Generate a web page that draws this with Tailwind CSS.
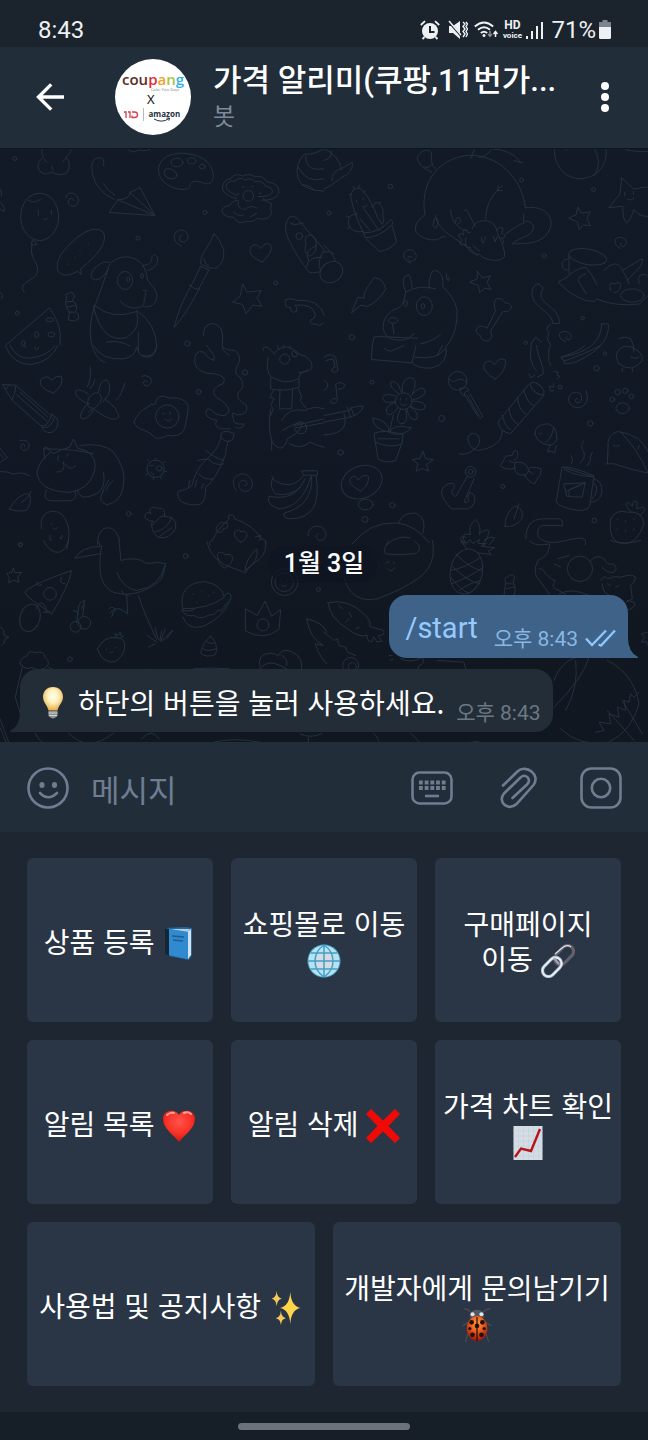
<!DOCTYPE html>
<html lang="ko">
<head>
<meta charset="utf-8">
<meta name="viewport" content="width=device-width, initial-scale=1">
<title>가격 알리미</title>
<script src="https://cdn.jsdelivr.net/npm/@tailwindcss/browser@4"></script>
</head>
<body class="flex min-h-screen flex-col bg-[#1d2631] font-[Roboto,'Noto_Sans_CJK_KR',sans-serif] text-white">

<!-- Status bar -->
<div class="flex h-[47px] shrink-0 items-center justify-between bg-[#1b242d] pt-3 pr-[37px] pl-[38px] text-[24px] leading-6 text-[#eef1f3]">
  <time>8:43</time>
  <div class="flex items-center gap-2">
    <svg class="h-5 w-5" viewBox="0 0 20 20" aria-label="알람"><circle cx="10" cy="11" r="8" fill="#eef1f3"/><path d="M10 6v6h4.500" fill="none" stroke="#1b242d" stroke-width="2"/><path d="M.8 5 5 1.200M19.200 5 15 1.200M4.500 17 2.500 19M15.500 17l2 2" stroke="#eef1f3" stroke-width="1.800" fill="none"/></svg>
    <svg class="-mr-0.5 h-5 w-5" viewBox="0 0 20 20" aria-label="진동"><path d="M1 6h4l7-5v18l-7-6H1z" fill="#eef1f3"/><path d="M0 1 14 17" stroke="#1b242d" stroke-width="2"/><path d="M1 1 13 15" stroke="#eef1f3" stroke-width="1.500"/><path d="m15 2 2 2-2 2.500 2 2.500-2 2.500 2 2.500-2 3M18 2l1.500 2L18 6.500 19.500 9 18 11.500l1.500 2.500-1.500 3" fill="none" stroke="#eef1f3" stroke-width="1.400"/></svg>
    <svg class="-mr-1 h-5 w-6" viewBox="0 0 24 20" fill="none" stroke="#eef1f3" stroke-width="1.900" aria-label="Wi-Fi"><path d="M.8 6.500q9.200-8 18.400 0M4 9.800q6-5.200 12 0M6.800 13q3.200-2.600 6.400 0"/><circle cx="10" cy="15.500" r="1.500" fill="#eef1f3" stroke="none"/><path d="M16 11v5m-2-2 2 2.500 2-2.500" stroke="#87909a" stroke-width="1.400"/><path d="M21.500 17v-5.500m-2 2.500 2-2.500 2 2.500" stroke-width="1.500"/></svg>
    <span class="flex w-5 flex-col items-center font-bold"><span class="text-[12px] leading-[11px]">HD</span><span class="text-[8px] leading-[9px]">voice</span></span>
    <svg class="-ml-1 h-5 w-[17px]" viewBox="0 0 17 20" stroke="#eef1f3" stroke-width="2" aria-label="신호"><path d="M1 16v3M6 11v8M11 6v13M16 2v17" /></svg>
    <span class="flex items-center gap-[3px]">71%<svg class="h-5 w-3" viewBox="0 0 12 20" aria-hidden="true"><path d="M3.500 0h5v2H12v6H0V2h3.500z" fill="#7c858e"/><path d="M0 7h12v10.500q0 1.500-1.500 1.500h-9Q0 19 0 17.500z" fill="#eef1f3"/></svg></span>
  </div>
</div>

<!-- Chat header -->
<header class="flex h-[101px] shrink-0 items-center bg-[#222d3a] pr-[39px] pb-0.5 pl-9">
  <button type="button" aria-label="뒤로" class="shrink-0"><svg class="h-7 w-7" viewBox="0 0 28 28" fill="none" stroke="#fff" stroke-width="3.400"><path d="M28 14H3M15.200 1.400 2.500 14l12.700 12.600"/></svg></button>
  <svg class="ml-[51px] h-[76px] w-[76px] shrink-0" viewBox="0 0 76 76" role="img" aria-label="coupang X 11번가 amazon">
    <circle cx="38" cy="38" r="38" fill="#fff"/>
    <text x="7" y="26" font-family="Open Sans, sans-serif" font-size="15" font-weight="600" fill="#5a2c25">cou<tspan fill="#d9303a">p</tspan><tspan fill="#f0a02c">a</tspan><tspan fill="#a4c63c">n</tspan><tspan fill="#35b2e2">g</tspan></text>
    <text x="36" y="32" font-family="Roboto, sans-serif" font-size="4" fill="#999">Color Your Days</text>
    <text x="32" y="45" font-family="Noto Sans, sans-serif" font-size="13" fill="#111">X</text>
    <path d="M9 53h2v6M13 53h2v6M17 53h2.500c4 0 4 5.500 0 5.500H17v-2" fill="none" stroke="#dd3848" stroke-width="1.300"/>
    <path d="M28.500 49v13" stroke="#bbb" stroke-width="1"/>
    <text x="33.500" y="58" font-family="Open Sans, sans-serif" font-size="8" font-weight="700" fill="#252f3e">amazon</text>
    <path d="M39 60q8 4.500 15-.5m-2.500-.3 3-.2-.6 2.600" fill="none" stroke="#252f3e" stroke-width="1"/>
  </svg>
  <div class="ml-[22px] min-w-0 flex-1">
    <h1 class="truncate text-[31px] leading-10 font-medium">가격 알리미(쿠팡,11번가...</h1>
    <p class="text-[24px] leading-8 text-[#7d8997]">봇</p>
  </div>
  <button type="button" aria-label="메뉴" class="shrink-0"><svg class="h-[30px] w-2" viewBox="0 0 8 30" fill="#fff"><circle cx="4" cy="4" r="4"/><circle cx="4" cy="15" r="4"/><circle cx="4" cy="26" r="4"/></svg></button>
</header>

<!-- Conversation -->
<main class="relative flex min-h-[594px] flex-1 flex-col justify-end overflow-hidden border-t border-[#0e151e] bg-linear-to-b from-[#121a27] to-[#101720] pb-[10px]">
  <!-- Doodle wallpaper -->
  <svg class="absolute inset-0 h-full w-full" viewBox="0 148 648 594" preserveAspectRatio="xMidYMid slice" fill="none" stroke="#243140" stroke-width="3" stroke-linecap="round" stroke-linejoin="round" aria-hidden="true">
    <g transform="translate(0 145) scale(.333333)">
      <circle cx="44" cy="39" r="6"/><circle cx="615" cy="201" r="6"/><circle cx="414" cy="278" r="6"/><circle cx="827" cy="412" r="6"/><circle cx="52" cy="503" r="6"/><circle cx="562" cy="594" r="8"/>
      <path d="M130 0q-10 20 0 35-25 20-12 40 15 18 35 5 30 15 50 0 12-25-5-45 20-15 15-35M132 40l8 10M200 35l-12 15M160 75l-5-12M380 8q15 20 35 5 25 8 45-8"/>
      <path d="M310 60q8-25-17-23-25 5-15 50 10 50 65 75M310 115q15 22 35 35M328 200l25-37q38-2 37-22l30-15 44 83zM464 209 353 163M464 209 390 141"/>
      <path d="M478 60c10-35 60-45 110-30 45 15 60 55 48 78-15 20-35-10-60 2-15 10 5 20-30 22-50-5-80-40-68-72z"/><ellipse cx="531" cy="51" rx="18" ry="13"/><ellipse cx="575" cy="46" rx="13" ry="9"/><ellipse cx="607" cy="63" rx="9" ry="7"/><ellipse cx="511" cy="85" rx="20" ry="14" transform="rotate(25 511 85)"/>
      <path d="M710 160q-50-15-42-40 5-20 25-20 10-20 35-8 20-10 38 2 25-5 35 15 40 5 35 35-10 22-52 20M712 150q-42-15-32-35 10-12 25-8 15-15 30-3 20-10 30 5 25-5 30 12 25 5 22 20-10 14-42 12M715 165q-20 0-25 15-20 0-25 17 10 20 35 18 15 25 40 12 20 5 30-8 35 8 45-15-8-15 0-30-20-5-25-15M715 170q-5 20 20 22 15-15 35-5M700 200q20 15 30 10M750 215l20-12"/><circle cx="745" cy="151" r="16"/><path d="M730 123v4M758 121v4M712 145h6M777 143h6"/>
      <ellipse cx="119" cy="214" rx="57" ry="71"/><path d="M85 165q20 12 38-5M115 195v15M154 195v12M130 218q6 9 13 0M98 285l-5 13h18l-8-13M96 298c-10 40 20 50 17 80-5 30-65 30-40 63"/>
      <path d="M198 158q0-18 20-15 20 6 17 25-5 17-20 14-16-7-8-20 10-8 14 3M545 302q-27-12-22-35 10-18 30-12 16 12 9 28-10 12-22 3-6-12 5-17"/>
      <path d="M232 378q-45 25-60-5-10-40 60-98 55-40 78-15 20 40-68 110l2 16z"/><path d="M265 293v2M240 315v2M225 335v2M205 355v2"/>
      <path d="M285 480 325 370c-5-10 20-35 50-36 35 0 60 20 66 60 0 20 35 35 29 65-6 25-28 28-40 24M325 370c-20 40-50 40-52 20 5-25 40-50 57-38M430 360c40-5 15-30 35-32 15 5 10 40-22 47M285 480c-30 80-10 160 30 170M285 480q50 45 125 18 15 50-30 78-75 20-100-95M360 465c10 20 60 35 72 8 0-15 5-20 5-30M410 495q60 40 60 110-10 35-45 25M415 560v60M320 590q40-8 70 12"/><ellipse cx="375" cy="405" rx="23" ry="27"/><ellipse cx="385" cy="402" rx="4" ry="7"/><ellipse cx="426" cy="391" rx="4" ry="8"/><path d="M429 435q6 5 12 0"/>
      <path d="M200 455q-8-10 5-10 10-12 18 5 0 10-6 14 20 15 10 35 12 8 8 22-15 10-30 2 0-15 5-22-20-20-10-46zM202 468h16M200 485l27-5M205 500h20"/>
      <path d="M642 265c40 40 35 80 10 100-15 10-38-5-50-10 0-35 20-40 40-90zM612 340q5 20 15 20M600 362l28 12M602 362c-30 70-55 90-80 184 50-60 55-80 104-172M568 418q15 15 30 14"/>
      <path d="M787 350q-50-20-34-46 15-15 30 5 10-20 28-12 12 20-24 53zM728 415l13 25 43-5-13 22 15 25-28-3-20 26-10-28-30-7 22-18z"/>
      <path d="M970 10q-30 20-55 15-30 25-22 70 10 40 80 42M917 30q0 50 53 40M895 65q25 50 75 35M907 120q20-5 35 14"/>
      <path d="M870 213q-20 20-10 55 20 50 65 110 10 8 38 0-15-30 10-65l-70-80q-15-25-33-20zM870 232q10 10 40 0M925 345q-15-30 25-45M920 365q0-30 45-30"/><circle cx="898" cy="272" r="10"/><path d="M930 268q-20 0-12 30-10 20 10 35 22-10 20-30 5-30-18-35"/>
      <path d="M858 462q-10 25 14 25 0 20 18 10 2-12-4-18 55-5 60 30 0 10-15 15 0 15 20 12 5 10 18-3M858 462q20-5 30 2 70-5 85 45"/>
      <path d="M20 597 148 487q40 50 32 110"/><ellipse cx="149" cy="523" rx="12" ry="6"/><ellipse cx="110" cy="567" rx="6" ry="9"/><ellipse cx="154" cy="567" rx="10" ry="7"/><ellipse cx="70" cy="593" rx="5" ry="8"/>
      <path d="M610 570q0-35 30-36 35 5 27 65 0 20 20 30M0 130q8 15 4 22M0 170q20 20 12 28l-12-8M0 440q12 10 4 20"/>
    </g>
    <g transform="translate(324 145) scale(.333333)">
      <circle cx="199" cy="123" r="7"/><circle cx="15" cy="203" r="6"/><circle cx="593" cy="104" r="6"/><circle cx="809" cy="132" r="6"/><circle cx="661" cy="331" r="6"/><circle cx="776" cy="518" r="5"/><circle cx="84" cy="575" r="8"/><circle cx="605" cy="592" r="5"/>
      <path d="M0 10q45 20 52 60l33-20q5 30-35 48-30 25-50 32M52 70q-30 5-28 36M0 45q25-5 22-30"/>
      <path d="M120 265q-30-60-40-110 5-35 30-25 20 15 40 60 10 30 24 45M120 190l45 65M108 220l30 35M145 185q5-15 17-14 20 15 14 40 8 10-1 25M100 205q-30 0-27 30 10 30 45 23M82 145l-6 3M90 130l-2-8M105 127v-7M118 140l7-4M75 215l-7-3M77 245l-7 5M165 175l5-6"/><path d="M120 262q50 0 80-40 10 5 5 15-40 40-80 40zM126 280l40 38q35-5 52-30l-14-48M115 182q8 8 14-4M98 165v5M117 157v5"/>
      <path d="M303 207c-15-80 25-165 130-178 110 0 165 90 171 158M303 207q-35 25-28 50 20 30 65 26 15-12 25-10M323 80c-20-10-40-20-43-43 10-30 40-25 42-15 0 30 2 40 13 48M302 65q10 5 20-8M604 187c60-10 85 30 75 60-20 50-70 47-115 48 30-25 65-20 65-55-15-20-30-12-30-8v-25M485 222c0-60 40-95 50-100M523 120l-3 15h14M545 265q50-35 54-33M335 210c0 50 90 80 125 120M380 195c0 30 25 60 50 60M420 195l8-2 26 50M455 0l-15 40M465 35q20 0 35-20M500 10q60 0 90 40M570 45l25 8"/>
      <path d="M445 250c5-30 60-35 72 0 5 25 30 60 24 85-20 20-65 5-75-8-30 0-50-35-40-50M440 260q-10 5-15-8-10 0-5 15-12-5-18 2l12 14q-10 8-5 15h15q0 10 15 8M520 255q5-15 15-8 5 10-3 15 15 5 8 15-8 2-10 0 15 10 5 20M472 275q0 15 5 18l8-20M508 273l5 15 8-15M448 300q10 15 18 16M330 225q0-10 8-7 10 8-2 30-15-5-6-23M395 230q0-20 12-12 7 10-4 17"/>
      <path d="M693 0c-10 50 25 100 76 100 60-5 85-50 76-100M805 0q35 50 5 92M725 15l10-10M905 12q40 10 70 5"/>
      <path d="m893 97 37 34q40-10 45-5M893 97l-5 48-34 42 42-5q0 40 12 50 10-5 22-40 20 25 45 20M902 140v12M928 138v10M910 160q10 8 20-2"/>
      <path d="m762 185 10 18 27-4-10 20 10 22-20-3-14 14-4-22-27-12 22-10zM460 377l14 20 25-6-10 20 12 20-20-3-14 14-4-22-26-10 22-10z"/>
      <path d="M260 353q-25-10-20-30 10-15 28-8 15 15 5 28-15 10-22-3 2-12 13-5M890 309q-22-10-16-28 15-12 30 0 8 15-5 22-15-2-8-12M725 588q-25-10-18-25 15-10 30 0 10 14-2 20-14-2-7-10"/>
      <ellipse cx="791" cy="334" rx="57" ry="23" transform="rotate(10 791 334)"/><path d="M735 330v55M735 340q-25 0-20 25 5 10 18 8M730 395l-28 15q60 60 110 58l5-8q60 25 130 15l30-30M730 395q20-25 55-30 20 20 35 55M785 385q-30 10-20 25 10 15 22 35M840 375q40-40 55 0 15 20 20 40M895 375l60-36q5 15-20 40l-25 25M860 435q-10-30 15-20 15-12 15 8-5 20-20 18M945 415q-5-30 10-27 10-5 20 8"/><ellipse cx="925" cy="450" rx="35" ry="20"/><path d="M0 300q25 20 35 48M0 320q20-5 30 5"/><ellipse cx="22" cy="380" rx="36" ry="30" transform="rotate(-35 22 380)"/>
      <path d="m83 501 18-45 20 2c-5-20 15-40 30-62q30 5 34 35-20 35-55 52l-18-4z"/>
      <path d="M245 440q-20-50 10-52 5 5 10 40M315 430q0-60 20-55 25 5 22 50 50 45 42 95-5 50-30 80M245 440q40-25 90-10M245 440q-5 40-22 47-45 15-46 60 5 30 35 36 20 5 40-4l20-15M205 535l5 30M150 575l10-2 120 5M350 565q-15 20-60 30M150 575l-5 25"/><ellipse cx="301" cy="482" rx="24" ry="28"/><ellipse cx="297" cy="482" rx="5" ry="8"/><ellipse cx="245" cy="474" rx="5" ry="10"/><ellipse cx="207" cy="525" rx="14" ry="8"/><path d="M368 385q-5 12 5 22M375 395v10"/>
      <path d="m515 495-25 52q-20-10-30 0-10 15 8 22 5 20 25 17 15-10 7-30l37-58q20 3 26-13-3-12-20-13-10-17-26-12-12 12-2 35z"/>
      <path d="m643 415 15 12c-30 50 50 50 48 107h-20c0-40-75-50-60-103q5-15 17-16zM680 535q-20 15-5 25l-5 20 10 20M833 535h20q5 60-70 100-30 20-60 20l-10-20q120-20 120-100zM885 580q15-10 35 0 10 15 10 40M620 597l15-22 18 15"/>
    </g>
    <g transform="translate(0 345) scale(.333333)">
      <circle cx="735" cy="81" r="8"/><circle cx="596" cy="139" r="7"/><circle cx="386" cy="505" r="7"/><circle cx="62" cy="597" r="6"/>
      <path d="M15 0q25 60 80 57 60-10 78-57M30 0q20 40 60 38 50-5 75-38M280 0q25 45 90 40 35-5 40-35M410 5q5 30 35 30 25-5 25-35M70 0l8 6M104 5q5 20 12 0"/>
      <path d="m8 118 28 46 90 80q5 20 28 17 20-10 20-32-5-20-25-22L48 120zM36 164q10-20 12-44M25 120q-5 15-12 8M122 240q20 10 35-35M130 247q25 0 33-30M50 148l92 80M60 140l84 75"/>
      <path d="M160 143q-45-15-39-39 20-20 33 0 15-15 30-12 10 25-24 51zM270 62q5 40-8 62M285 102q-5 20-15 28M374 112q-5 30-25 52"/>
      <path d="M265 145q-40-25-39 0 15 25 43 30M265 160q10-20 30-18 5-40 25-39 15 15 5 45l-15 20M300 145q20 25-35 55M260 178q-25 30-17 40 15 10 40-25M315 160q40 30 42 55-15 20-70-20M265 160q-10 30 15 28"/>
      <path d="M425 92q10-5 25 3 10 15-5 26-18 0-15-12 5-8 12 0M60 285q25-5 28 15-5 18-20 14-12-10 0-18 10 0 5 8"/>
      <path d="M402 230q10-30 40-45 10-10 25-10 0-20 20-24 20 10 40 6 35 5 38 30-5 40-12 65-15 25-50 18-15 10-35 8-20-20-40-25-20-5-26-23z"/><circle cx="502" cy="213" r="35"/><path d="M487 205q3-5 7 0M510 200v6M495 220q10 15 20 0"/>
      <path d="M135 340q-10-40 5-35l20 20q25-15 50-20l10-25 13 28q50 10 53 50-5 70-80 83-90-5-95-60 5-35 40-60M130 310q100 0 150 15M240 300q70-10 100 20 40 50 30 100-5 50-50 58-25-10-15-30 5-20 22-45M310 380q15 70-60 75-15-5-17-20M175 330q-5 10 0 15M205 325l-5 8M190 350q10 30-20 30M195 355q15 25 33 5M140 433q-15 25 10 33h60q25-5 15-28M320 435q0-15 20-30"/>
      <circle cx="467" cy="370" r="26"/><circle cx="478" cy="369" r="8"/><path d="M447 347l-4-3M467 343v-5M490 352l5-4M494 378h6M480 393l4 6M460 396v6M443 385l-5 4M450 360h8M452 380l10 8"/>
      <path d="M28 490q30-50 60-45 10 30-10 50-30 5-50-5zM65 470q20-10 28-33M0 378q25 0 40 8 25-10 50 6M0 350l22-14L0 308M0 325l10 12"/>
      <path d="M125 550c-10-40 20-60 50-50 30 15 40 60 25 110M155 535v3M160 548q6 8 12-2M150 570q-3 25 5 10M180 575q5 15 6-5M293 597c-5-60 55-70 66-10"/>
      <path d="M455 540q0-18 5-12-30-5-25-20 10-12 18-3-10-20 10-20 10 5 15 3 20 0 15 25 40 0 34 35-20 35-50 28-20-10-22-36zM455 540l25-25 15-5M465 560q40-10 50-45M480 572q20-15 35-25"/>
      <path d="M620 0l22 30v15q-25-10-30-25-30-10-28 30 5 35 60 35 40 8 25 30-45 15-20 40 35 20 38 40-5 25-40 10-30-30-30 0 5 15 35 20-15 15 10 25h30M665 0q10 15 40 15 25 20 5 50-10 20 10 30 20 30-5 45-10 20 25 40 5 30-30 28-20-15-10 12 0 20 32 15-5 20-25 10M665 262q10-10 38 2l-5 18q-15 15-35-5zM664 275q-10 40-48 70-30 30-40 75-10 10-42 18-5 15 10 30 25 15 58 8 15-10 15-50 35-30 60-100 0-20 8-40M618 315q30 25 52 30M595 345q35-10 40 5 15 10 35 5M595 385q20 20 45 15M570 405l-5 20M590 405l-5 20M610 415l-5 15"/>
      <path d="M710 435c-20-20-10-50 20-50 30 5 35 40 15 50-20 10-40-15-20-30 20-5 20 20 8 15M925 570c-5-20 20-35 40-25 20 15 15 40-5 40-15-5-15-20-5-20"/>
      <path d="M790 15q-5-15 15-8l20 20M805 35q-10 45 10 60M825 20q30-30 60-5M885 20l35 15q20 15 15 35-10 10-30 10l-10 20q-40 20-80-5M832 0l5 12M850 0v8M870 0v10M895 80q20 5 28-10M812 95v35q40 10 85-5v-25M840 130l-2 55M878 130l-3 60M838 190h35M820 135l-10 20 12 5-10 20 8 10-8 20M895 130l10 25-5 10 20 25M812 190q-10 60 5 100 30 40 45-10 40-20 45-45-10-10-60 20M815 285v30M845 225q20-40 70-30 25-15 57-5M870 295q30 20 60-5 20 10 42 15"/><circle cx="854" cy="41" r="15"/><circle cx="884" cy="25" r="9"/><circle cx="902" cy="247" r="18"/><path d="M885 240l87-20M888 247l84-15"/>
      <path d="m905 377 5 12h42v-12zM912 390q-40 50-95 10-10 25 10 45 40 10 75-20M915 400q-30 70-108 52-10 25 30 38 70-5 95-95M935 390q5 90-80 112-10 15 15 18 100 0 78-130M820 400l-5-8M855 502l-5 5"/>
      <path d="M630 600q-5-15 8-15 10-30 50-65-10-10 5-12 12 0 10 12 60 20 80 60 15 0 15 15M650 545q10-20 25-12 10-5 8 5 2 12-13 12 0 12-15 10-10-5-5-15M722 590q-25-15-17-32 15-10 18 2 10-8 18 5 0 20-19 25zM765 575l18-5-5 15"/>
    </g>
    <g transform="translate(324 345) scale(.333333)">
      <circle cx="144" cy="110" r="6"/><circle cx="353" cy="219" r="9"/><circle cx="50" cy="321" r="8"/><circle cx="205" cy="479" r="8"/><circle cx="123" cy="522" r="9"/><circle cx="537" cy="423" r="6"/><circle cx="818" cy="68" r="8"/><circle cx="799" cy="234" r="8"/><circle cx="811" cy="525" r="7"/><circle cx="843" cy="24" r="5"/><circle cx="708" cy="125" r="6"/>
      <path d="M145 0l-3 42 122 10 12-52M180 8q15 15 30 5l30-13M264 52q20 20 60 15 50-10 42-65M272 35q70 10 90-25M340 30l15-30"/>
      <path d="M0 35q20-15 35 0l7 40q-10 10-20 2 2-12 12-12L27 40 5 45M0 105q15 5 10 20-5 10-10 10M35 115l5 50q-10 15-20 5 5-15 15-10M38 115q15-10 25 5-5 12-20 12M0 210l75-15q10-15 43-13-5 25-50 35L0 230M60 205q20 60-60 63M70 185l10 30M80 185l10 25"/>
      <circle cx="239" cy="167" r="25"/><path d="M225 145q-30-20-25-35 20-10 32 30M235 140q-5-40 25-44 25 5 5 50M262 150q30-35 42-15 0 20-38 28M266 167q40 0 38 20-15 15-45-5M258 183q30 20 20 38-20 10-30-30M245 192q10 45-15 43-20-10 0-45M222 188q-30 35-35 10 0-20 28-28M214 168q-35 10-39-12 5-15 40-5M230 158v6M247 158v6M230 175q10 10 18 0M208 210q-5 20-12 50M196 260q5 5 0 0-50-10-50-43 50 10 50 43M196 262q10-30 66-15-20 25-60 18M152 262q30-10 85 5l-3 28q-35 15-80-5zM154 290l8 50q20 15 53 5l18-50M160 280h65"/>
      <circle cx="401" cy="106" r="28"/><path d="M375 100q15 15 25 3l15-2 10 8M408 130q20-10 27 5-20 5-12 15-15 0-15-20zM423 150l40 65q12 8 12-5l-37-65M430 150l35 60"/>
      <path d="M515 101q-45-25-34-48 20-15 30 5 15-25 33-15 5 30-29 58z"/>
      <path d="m640 95 18-10c0-30-20-60-20-85M622 0q-10 50 15 75M680 0q-10 20-5 30-5 15 5 30M712 35q60-20 70-35M712 35l8 12q70-25 110-47M615 85l5 12 12-8M690 78l12 2-3 8 8 4-8 8M688 115l2 10-15-3 5 15 10-2"/>
      <ellipse cx="640" cy="129" rx="12" ry="25" transform="rotate(-50 640 129)"/><path d="M615 115 522 230q5 30 38 34l100-115M600 135q10 40 30 45M580 155q5 40 25 50M555 190q5 35 28 48M535 210q10 40 25 42M535 255q0 50-75 60-30-10-28-40 10-20 30-5 15 25-15 45-20 15-42 10"/>
      <path d="M786 135q15 40-20 52-30 0-33-27 10-30 37-15 10 25-12 28-10-10 2-15"/>
      <ellipse cx="896" cy="188" rx="20" ry="16"/><circle cx="865" cy="162" r="7"/><circle cx="881" cy="140" r="8"/><circle cx="904" cy="136" r="8"/><circle cx="922" cy="153" r="7"/><path d="M878 25q10-30 45-20 35 15 32 40-30 40-70 10-10-20-7-30zM895 68v10M925 68v10M920 35q15 8 25 0"/>
      <path d="M633 265q0-30 40-30 30 10 25 50l-15 15q-45-5-50-35zM690 245q-10 40-25 45M680 295l-10 25 12-3 10 5 5-22M645 262q5 8 8 0"/>
      <path d="m850 355 2-45q-5-45 30-52 70 10 90 60M890 260q50 50 82 122M845 355h25q60 20 100 27M868 300q10 5 18 0M945 300l-3 10"/>
      <path d="m297 318 8 22 23 2-20 15 6 20-18-8-20 8 6-22-17-13 22-3zM570 345q15-5 10-28l-10-2-5 15-20 2-5 10q-15 25-10 20 20 15 45 5M575 350q-10 20 5 35 25 12 35-10-10-30-40-25zM612 370q10-10 40 0 0 20-12 30l-8 15q-20-5-32-30M555 345l15 8M625 385l-10-8"/>
      <ellipse cx="113" cy="410" rx="63" ry="48" transform="rotate(-22 113 410)"/><path d="M110 437q-40-20-32-38 15-15 25 5 15-20 30-12 5 25-23 45z"/><ellipse cx="125" cy="477" rx="22" ry="16"/>
      <circle cx="440" cy="379" r="16"/><circle cx="440" cy="379" r="7"/><path d="m430 393-35 60q-15-5-10-20 12-5 2-20-30 0-35 30 5 20 20 35l10 12h50q25-10 20-40l-15-10-5 15q5 20-12 15l30-70"/>
      <path d="M715 365q20-5 95 25l-12 85q0 20-35 20-60-10-66-25zM715 365l95 30M720 372q50 25 85 20M808 400q30 5 25 45-10 25-33 25M810 415q20 15-5 45M720 415l63-3-8 43-45-2zM783 412l-48 22v18M783 412l-55 25M740 330q10 10 2 24M780 285q-15 20 0 35 5 20-12 32M805 320q-10 15-5 25l-10 15"/>
      <path d="M860 520q15-30 50-20 45-5 50 35-20 60-60 60-50-5-40-75zM920 500q-20-25-10-30l15 12q0-20 15-12l-2 20q25-10 25 5l-15 15M880 520v4M905 525v4M930 520v4M880 550v4M905 555v4M930 550v4"/>
      <path d="M543 543q0-40 30-62 30 10 20 40-20 25-50 22zM570 520l15-45M85 595q50-65 130-63 60 5 100 60M225 530q10-30 50-27 35 15 22 60M190 597q30-30 70-20"/>
      <path d="M605 580q0-60 50-60h50q15 5 10 20h-60q-20 10-12 35 20 20 60 15 20-5 60-12 30 0 20 20M425 597q-20-40 15-30-10-25 15-45 20 25 10 45 20-20 30-10-5 30-20 40M480 585q20-15 32-8l-15 20M425 575q-15-5-15 5l10 15"/>
    </g>
    <g transform="translate(0 540) scale(.333333)">
      <circle cx="61" cy="13" r="6"/><circle cx="557" cy="47" r="7"/><circle cx="210" cy="356" r="7"/><circle cx="955" cy="147" r="6"/>
      <path d="m40 83 5 14 20-2-12 15 4 15-16-6-15 8 2-16-8-12 15-3zM130 0q20 40 50 35 20-10 25-35"/>
      <path d="M225 53q20-35 75-35l-3-15M225 53l78-14M305 15c-10 60-10 120 35 140 60 20 120-15 140-35 15-20 10-30 18-50l-28-5q-30 10-45-5-30-10-62 0L357 0M350 95q20 50 60 55 70-10 85-75M380 165l3 55-18-12M385 165q-20-5-20-15M415 165q20 60 55 132M345 205q-10-10-18 0M345 205l-15 12M365 208q-20-15-30 20M475 297l-10-35M480 300l5-30M482 303l14-38M488 300l28-30M470 305l-28-20M465 310l-20 10M500 295l18-25"/>
      <path d="M75 155q10-20 140-65-10 50-60 130L85 170zM110 125q0 15 15 8M185 110q-10 20 10 20M110 205q5-25 20-15 10 10 10 25M130 215h20"/><circle cx="150" cy="160" r="19"/><ellipse cx="90" cy="232" rx="30" ry="42" transform="rotate(15 90 232)"/>
      <circle cx="227" cy="259" r="16"/><circle cx="253" cy="247" r="19"/><path d="M230 245l5-40q0-20 20-25l-10 25M220 210q10 0 15 10M248 228l5-35M0 260q15 5 12 25l15 5-12 5q0 15-10 20"/>
      <path d="M292 325q20-40 60-33 30 0 20 40-15 35-40 32-30-5-40-39zM350 292l-5-12 10 5 5-10 5 15 5-2M320 325v3M347 320v3M330 335q5 5 10-2M60 370q0-20 20-22 5-20 25-12 30-5 30 15 15 10 8 25-20 20-50 5-15 10-33-11zM68 375l-22 95 18 60M145 380l15 7"/>
      <path d="M620 5q15 60 85 80l32 12q10-20 40-40 25-20 20-57M655 55q-10-20 10-20 10 5 10 8 20-5 23 10-2 18-23 30-20-10-20-28M735 90q0-30 35-65 10 35-35 65"/>
      <path d="M548 205q-15-75 65-82 55 10 60 48-50 35-125 34zM673 165q15-15 20 0 0 20-20 30 0 15-20 15l-10 12q-20 0-30 8-20 5-30-5-25 5-38-15 30 5 40-5M548 230q15 40 60 28 60-25 80-75"/><path d="M580 160v2M605 150v2M625 165v2M590 185v2M640 155v2"/>
      <path d="m737 205 35 20 23-43 20 45 27-20-5 60q-45 35-100 5z"/><circle cx="789" cy="253" r="18"/><circle cx="854" cy="125" r="40"/><circle cx="853" cy="125" r="28"/><path d="M843 118v5M862 118v5M845 135q8 7 14 0"/>
      <path d="M632 287q25 25 15 55-30 12-45-5 5-30 30-50zM620 303q10 10 22 5M608 325q15 10 40 0"/>
      <path d="M780 380q-10-40 30-42 15 0 25 8 10-25 40-12 35 15 30 52M780 385q20-30 60-10l20 10M845 345q20 10 15 30M920 235q50 10 60 40M920 235q10 60 50 80l-25-5q20 50 35 60M440 388q10-5 15 0M580 385q50-5 110 0"/>
      <path d="M0 535 28 610M0 560l20 50M105 578q10 20 25 30M205 578q60 60 135 0M425 595q30-35 52 0M640 605q60-15 140 0M900 580q30 15 65 0M925 590v20"/>
    </g>
    <g transform="translate(324 540) scale(.333333)">
      <path d="M60 110q20 80 100 65 80-30 120-60 60-40 45-115M195 0q-20 25-10 40 40 5 85 0 20-5 15-25l-15-15M150 50q30 20 5 45M185 68q5-8 10-3M208 65q5 2 3 5M192 85q8 15 20-3"/>
      <ellipse cx="427" cy="93" rx="48" ry="68" transform="rotate(12 427 93)"/><path d="M395 40q50 50 80 50M382 75q50 50 85 55M380 110q30 40 55 48M470 50q-40 30-90 40M478 80q-40 30-95 50M470 120q-40 10-65 30M430 27l-20-25 22 5 5-10 10 12 20-12-5 12h25l-15 8 40 5-20 10 10 10-40-5"/>
      <path d="M545 125q-8-15 5-15 15-15 22 0-5 10-3 20 10 20 0 35M545 125l-5 40M545 130h20M545 145l25-5M617 0q10 20 60 10 0 35-35 50-20 40 5 60l30 42M645 85q10-5 20 15 20 20 30 20-20 20 10 30l20 12M700 55l35-10M690 70l20 10"/><circle cx="768" cy="85" r="38"/><path d="M800 60q20-20 40-5 10 20 25 15 20 10 5 25-20 5-35-15M830 120q10-20 20-5 20-10 40-5l20-5q15-5 25 5-5 20-15 25l5 40-20 10M835 130q0 35 35 38M850 130l10 5M885 135l-10 5M705 160q40-20 90 5M860 0q40 15 90 0M910 180l20 5q10 10-10 20l-10 5M972 275l-20 5 10 10-10 15 15-2 5 12"/>
      <path d="M12 187q60-15 110 35 20 20 15 35l30 10q20 0 10 15l-15 5 12 15-15 2-10-15-5 15q-15 0-15-20-20 10-60-20-50-30-57-77zM45 195l10 10M75 215l8 15M65 245l10-10M95 265l10-5M0 275l30 25 10-5 5 20 20 5 5 15 25 10"/><circle cx="80" cy="375" r="24"/><circle cx="85" cy="378" r="12"/><path d="M195 345h10M200 360l8-5M230 355q30 15 65-5 10 20-10 25-10 15 10 15M340 360l80 5 5 20"/>
      <path d="M690 420c20-60 70-75 85-70M755 360q10 80-30 150M690 500q90-90 105-150M850 360q80 40 95 130-20 80-90 115-90 15-145-40M945 455l-15 15-10-10-5 25-15-5 5 30-25-10 5 30-30-10 5 30-35-5 15 25-25 5M895 480l60 100M850 510l80 90M440 605q10-5 30 0M260 578l30 30M150 580q20 15 10 30"/>
    </g>
  </svg>

  <div class="relative flex flex-col">
    <div class="mb-3 self-center rounded-full bg-[#0e1621]/70 px-4 text-[25px] leading-[38px] font-medium">1월 3일</div>

    <div class="relative mr-5 mb-[11px] flex h-[63px] items-end self-end rounded-[18px] rounded-br-none bg-[#3f6289] pr-3 pl-4">
      <a href="#" class="pb-3 text-[29px] leading-9 text-[#94caff]">/start</a>
      <span class="ml-4 pb-1 text-[21px] leading-[30px] text-[#89b7e2]">오후 8:43</span>
      <svg class="mb-[11px] ml-[7px] h-[18px] w-[31px]" viewBox="0 0 31 18" fill="none" stroke="#8cc6fb" stroke-width="2.400" aria-label="읽음"><path d="m1 9.500 6 6.500L21 1.500M13.500 15.500 16 16.500 30 1.500"/></svg>
      <svg class="absolute -right-[10px] bottom-0 h-5 w-[11px]" viewBox="0 0 11 20" fill="#3f6289" aria-hidden="true"><path d="M0 0h1q0 14 10 19v1H0z"/></svg>
    </div>

    <div class="relative ml-5 flex h-[63px] items-end self-start rounded-[18px] rounded-bl-none bg-[#222d38] pr-3 pl-[22px]">
      <svg class="mb-[13px] h-8 w-[22px]" viewBox="0 0 22 32" role="img" aria-label="전구">
        <defs><radialGradient id="bulb" cx=".5" cy=".4" r=".6"><stop offset="0" stop-color="#fffef0"/><stop offset=".45" stop-color="#fff2bd"/><stop offset="1" stop-color="#e5ad4b"/></radialGradient></defs>
        <path d="M11 0C4.500 0 1 4.800 1 10c0 5 4 7.500 5.500 13.500h9C17 17.500 21 15 21 10 21 4.800 17.500 0 11 0z" fill="url(#bulb)"/><path d="M6.500 24h9v5l-2 1.500q-2.500 2-5 0l-2-1.500z" fill="#8d9092"/><path d="M6.500 26h9M7 28.500h8" stroke="#d0d2d2" stroke-width="1"/>
      </svg>
      <span class="ml-[14px] pb-3 font-['Noto_Sans_CJK_KR',sans-serif] text-[28px] leading-9">하단의 버튼을 눌러 사용하세요.</span>
      <span class="ml-3 pb-1 text-[21px] leading-[30px] text-[#6c7883]">오후 8:43</span>
      <svg class="absolute bottom-0 -left-[10px] h-5 w-[11px]" viewBox="0 0 11 20" fill="#222d38" aria-hidden="true"><path d="M11 0h-1Q10 14 0 19v1h11z"/></svg>
    </div>
  </div>
</main>

<!-- Message input -->
<form class="flex h-[90px] shrink-0 items-center bg-[#222d3a] pt-0.5 pr-[26px] pl-[27px] text-[#6e7d90]">
  <button type="button" aria-label="이모티콘" class="shrink-0"><svg class="h-[42px] w-[42px]" viewBox="0 0 42 42" fill="none" stroke="currentColor" stroke-width="2.600" stroke-linecap="round"><circle cx="21" cy="21" r="19.500"/><path d="M13 26q8 8.500 17 0"/><g fill="currentColor" stroke="none"><ellipse cx="15" cy="18" rx="2.600" ry="3"/><ellipse cx="27.500" cy="18" rx="2.600" ry="3"/></g></svg></button>
  <input type="text" aria-label="메시지" placeholder="메시지" class="ml-[22px] h-12 min-w-0 flex-1 bg-transparent font-['Noto_Sans_CJK_KR',sans-serif] text-[31px] outline-none placeholder:text-[#6e7d90]">
  <button type="button" aria-label="키보드" class="shrink-0"><svg class="h-[34px] w-[42px]" viewBox="0 0 42 34" fill="none" stroke="currentColor" stroke-width="2.600"><rect x="1.500" y="1.500" width="39" height="31" rx="7"/><path d="M8 11.500h27M8 17h27" stroke-width="3.800" stroke-dasharray="3.800 1.900"/><path d="M14 25h14"/></svg></button>
  <button type="button" aria-label="파일 첨부" class="ml-[47px] shrink-0"><svg class="h-[42px] w-[37px]" viewBox="0 0 37 42" fill="none" stroke="currentColor" stroke-width="2.600" stroke-linecap="round"><path d="M3 18.500 17.500 4.500C26-3.500 41 8 33.500 18L16.500 37C8 45-3 34.500 4 26.500L20.500 10.500c5-4.500 11 1.500 7 6.500L12.500 31"/></svg></button>
  <button type="button" aria-label="카메라" class="ml-[43px] shrink-0"><svg class="h-[42px] w-[42px]" viewBox="0 0 42 42" fill="none" stroke="currentColor" stroke-width="2.600"><rect x="1.500" y="1.500" width="39" height="39" rx="10"/><circle cx="21" cy="21" r="9.200"/></svg></button>
</form>

<!-- Bot keyboard -->
<section aria-label="봇 키보드" class="grid shrink-0 grid-cols-6 gap-[18px] px-[27px] py-[26px] font-['Noto_Sans_CJK_KR',sans-serif] text-[28px] leading-[35px] break-keep">
  <button type="button" class="col-span-2 h-41 rounded-md bg-[#2a3645] px-1 pt-0.5">상품 등록
    <svg class="-my-1 inline-block h-[34px] w-[34px] align-[-4px]" viewBox="0 0 34 34" aria-hidden="true"><path d="m3 1 21-1 6 1v27l-3 5-20-4-4-2z" fill="#2269a5"/><path d="M3 1l4 1v27l-4-2z" fill="#142536"/><path d="M7 2.500 28 2v25L26 32 7 28z" fill="#3187c9"/><path d="m25 5 4-3v26l-3 4z" fill="#d7e2e8"/><path d="m8 2 17 3 3-3" fill="#b7cbd8"/><path d="m7 2 19 3v27L7 28z" fill="#308ad0"/><path d="M10 9l12 1M11 13l10 1" stroke="#215d8c" stroke-width="1.500"/></svg></button>
  <button type="button" class="col-span-2 h-41 rounded-md bg-[#2a3645] px-1 pt-0.5">쇼핑몰로 이동
    <svg class="-my-1 inline-block h-[34px] w-[34px] align-[-4px]" viewBox="0 0 34 34" aria-hidden="true"><circle cx="17" cy="17" r="16.500" fill="#4aa9cd"/><circle cx="17" cy="17" r="15.500" fill="#b9e2f1"/><circle cx="18" cy="17" r="9" fill="#d7dce4"/><path d="M17 1v32M1 17h32M3.500 9h27M3.500 25h27M17 1C5 9 5 25 17 33M17 1c12 8 12 24 0 32" fill="none" stroke="#449fc3" stroke-width="1.500"/></svg></button>
  <button type="button" class="col-span-2 h-41 rounded-md bg-[#2a3645] px-1 pt-0.5">구매페이지 이동
    <svg class="-my-1 inline-block h-[34px] w-[34px] align-[-4px]" viewBox="0 0 34 34" fill="none" aria-hidden="true"><g stroke="#65606a" stroke-width="3.200"><rect x="12" y="5" width="22" height="12" rx="6" transform="rotate(-45 23 11)"/><rect x="0" y="17" width="22" height="12" rx="6" transform="rotate(-45 11 23)" stroke="#aebdce"/></g><rect x="0" y="17" width="22" height="12" rx="6" transform="rotate(-45 11 23)" stroke="#edf3fa" stroke-width="1.500"/><path d="m14 10 7-6q5-4 9-1" stroke="#d9e2ec" stroke-width="1.200"/><path d="m13 14 5 6" stroke="#a2a9b4" stroke-width="2"/></svg></button>
  <button type="button" class="col-span-2 h-41 rounded-md bg-[#2a3645] px-1 pt-0.5">알림 목록
    <svg class="-my-1 inline-block h-[34px] w-[34px] align-[-4px]" viewBox="0 0 34 34" aria-hidden="true"><defs><radialGradient id="heart" cx=".5" cy=".35" r=".65"><stop offset="0" stop-color="#ff5549"/><stop offset=".6" stop-color="#f83127"/><stop offset="1" stop-color="#d2140c"/></radialGradient></defs><path d="M17 33C13 27 1 20 1 10 1 1 13-1 17 6c4-7 16-5 16 4 0 10-12 17-16 23z" fill="url(#heart)"/><path d="M5 6q3-3 7-2M22 4q4-2 7 1" fill="none" stroke="#ff9a8e" stroke-width="2" stroke-linecap="round"/></svg></button>
  <button type="button" class="col-span-2 h-41 rounded-md bg-[#2a3645] px-1 pt-0.5">알림 삭제
    <svg class="-my-1 inline-block h-[34px] w-[34px] align-[-4px]" viewBox="0 0 34 34" aria-hidden="true"><path d="m5 0 12 11.500L29 0l5 5-11.500 12L34 29l-5 5-12-11.500L5 34l-5-5 11.500-12L0 5z" fill="#f00a05"/></svg></button>
  <button type="button" class="col-span-2 h-41 rounded-md bg-[#2a3645] px-1 pt-0.5">가격 차트 확인
    <svg class="-my-1 inline-block h-[34px] w-[34px] align-[-4px]" viewBox="0 0 34 34" aria-hidden="true"><path d="M2.500 0h29v34h-29z" fill="#d4dde5"/><path d="M7.500 0v34M12.500 0v34M17.500 0v34M22.500 0v34M27.500 0v34M2.500 5h29M2.500 10h29M2.500 15h29M2.500 20h29M2.500 25h29M2.500 30h29" stroke="#c6d1da" stroke-width=".7"/><path d="m4 31 6-8.500 10 2.500L29 3" fill="none" stroke="#b9141a" stroke-width="2.400"/></svg></button>
  <button type="button" class="col-span-3 h-41 rounded-md bg-[#2a3645] px-1 pt-0.5">사용법 및 공지사항
    <svg class="-my-1 inline-block h-[34px] w-[34px] align-[-4px]" viewBox="0 0 34 40" fill="#ffd54a" aria-hidden="true"><path d="M22 1q1 17 12 19-11 2-12 19-1-17-12-19Q21 18 22 1z"/><path d="M6 0q.5 8 6 9-5.500 1-6 9-.5-8-6-9Q5.500 8 6 0zM11 23q.5 8 6 9-5.500 1-6 8-.5-7-6-8Q10.500 31 11 23z" fill="#f7c95b"/></svg></button>
  <button type="button" class="col-span-3 h-41 rounded-md bg-[#2a3645] px-1 pt-0.5">개발자에게 문의남기기
    <svg class="-my-1 inline-block h-[34px] w-[34px] align-[-4px]" viewBox="0 0 34 38" aria-hidden="true"><defs><radialGradient id="bug" cx=".5" cy=".3" r=".7"><stop offset="0" stop-color="#ffa43c"/><stop offset=".5" stop-color="#e8551c"/><stop offset="1" stop-color="#931509"/></radialGradient></defs><path d="M11 7Q9 1 2 1M23 7q2-6 9-6M7 16l-6 4M27 16l6 4M7 28l-3 10M27 28l3 10" fill="none" stroke="#4b4c50" stroke-width="1.300"/><path d="M9 11q0-9 8-9t8 9z" fill="#525960"/><circle cx="12" cy="7" r="2.300" fill="#dfe5e9"/><circle cx="22" cy="7" r="2.300" fill="#dfe5e9"/><ellipse cx="17" cy="23" rx="11.500" ry="14" fill="url(#bug)"/><path d="M17 10v27" stroke="#2b0d08" stroke-width="1.400"/><g fill="#240e0a"><circle cx="17" cy="20" r="2.600"/><circle cx="11" cy="16" r="2.600"/><circle cx="23" cy="16" r="2.600"/><circle cx="9" cy="23" r="1.800"/><circle cx="25" cy="23" r="1.800"/><circle cx="12" cy="30" r="2.600"/><circle cx="22" cy="30" r="2.600"/></g></svg></button>
</section>

<!-- Gesture bar -->
<footer class="flex h-7 shrink-0 items-center justify-center bg-[#161e27]"><div class="h-[7px] w-[172px] rounded-full bg-[#6b727c]"></div></footer>
</body>
</html>
